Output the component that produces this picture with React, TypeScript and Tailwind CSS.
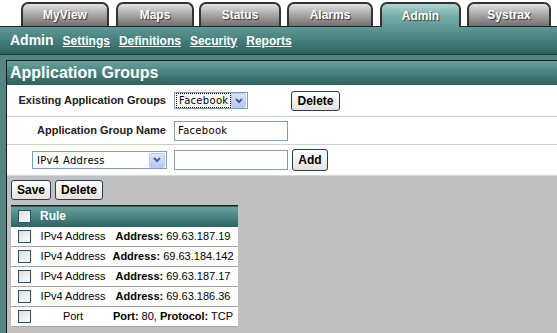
import React from "react";

const tabs = [
  { label: "MyView", cls: "ml-[21px] w-[88px]" },
  { label: "Maps", cls: "ml-[7px] w-[78px]" },
  { label: "Status", cls: "ml-[5px] w-[82px]" },
  { label: "Alarms", cls: "ml-[6px] w-[86px]" },
  { label: "Admin", cls: "ml-[7px] w-[81px]", active: true },
  { label: "Systrax", cls: "ml-[6px] w-[84px]" },
];

const rules = [
  { type: "IPv4 Address", parts: [["Address:", " 69.63.187.19"]] },
  { type: "IPv4 Address", parts: [["Address:", " 69.63.184.142"]] },
  { type: "IPv4 Address", parts: [["Address:", " 69.63.187.17"]] },
  { type: "IPv4 Address", parts: [["Address:", " 69.63.186.36"]] },
  { type: "Port", parts: [["Port:", " 80, "], ["Protocol:", " TCP"]] },
];

function Checkbox() {
  return (
    <span className="block h-[13px] w-[13px] border border-[#1c5180] bg-linear-to-br from-[#dcdcd7] to-white" />
  );
}

function Button({ children, cls }: { children: React.ReactNode; cls: string }) {
  return (
    <button
      className={
        "flex items-center justify-center rounded-[3px] border border-[#1f3e6a] bg-linear-to-b from-white to-[#e6e3d6] text-[12px] font-bold text-black " +
        cls
      }
    >
      {children}
    </button>
  );
}

function Select({ value, cls, focused }: { value: string; cls: string; focused?: boolean }) {
  return (
    <div className={"flex items-center border border-[#7f9db9] bg-white p-px " + cls}>
      <span
        className={
          "flex-1 px-[2px] font-['DejaVu_Sans'] text-[10px] leading-[13px] tracking-[0.3px] text-black " +
          (focused ? "border border-dotted border-black" : "border border-transparent")
        }
      >
        {value}
      </span>
      <span className="flex h-[15px] w-[16px] items-center justify-center rounded-[2px] border border-[#b9cbf3] bg-linear-to-b from-[#dbe5fd] to-[#b4c8f8]">
        <svg width="8" height="6" viewBox="0 0 8 6">
          <path d="M1 1 L4 4 L7 1" fill="none" stroke="#4d6185" strokeWidth="2" />
        </svg>
      </span>
    </div>
  );
}

function TextInput({ value }: { value: string }) {
  return (
    <div className="flex h-[20px] w-[114px] items-center border border-[#7f9db9] bg-white px-[3px] font-['DejaVu_Sans'] text-[10px] tracking-[0.3px] text-black">
      {value}
    </div>
  );
}

export default function App() {
  return (
    <div className="h-[333px] w-[557px] overflow-hidden bg-white font-['Liberation_Sans',Arial,sans-serif]">
      <div className="flex h-[27px] items-end border-b border-[#222]">
        {tabs.map((t) => (
          <div
            key={t.label}
            className={
              "flex h-[24px] items-center justify-center rounded-t-[7px] border-2 border-b-0 border-[#333] text-[12px] font-bold text-white [text-shadow:1px_1px_1px_#333] " +
              t.cls +
              (t.active
                ? " -mb-px h-[25px] bg-linear-to-b from-[#b0d4d1] via-[#78aeaa] to-[#5f9a96]"
                : " bg-linear-to-b from-[#e2e2e2] via-[#a6a6a6] to-[#707070]")
            }
          >
            {t.label}
          </div>
        ))}
      </div>

      <div className="flex h-[28px] items-center gap-[9px] border-b border-[#1d3b3a] bg-linear-to-b from-[#5f9a96] to-[#2d6260] pl-[10px] text-white">
        <span className="text-[14px] font-bold">Admin</span>
        <span className="text-[12px] font-bold underline">Settings</span>
        <span className="text-[12px] font-bold underline">Definitions</span>
        <span className="text-[12px] font-bold underline">Security</span>
        <span className="text-[12px] font-bold underline">Reports</span>
      </div>

      <div className="h-full bg-[#558583] pl-[6px] pt-[5px]">
        <div className="h-full border-l border-t border-[#1a1a1a] bg-[#c0c0c0]">
          <div className="flex h-[24px] items-center bg-linear-to-b from-[#68a29e] to-[#2c5f5d] pl-[3px] text-[16px] font-bold text-white">
            Application Groups
          </div>

          <div className="bg-white">
            <div className="flex h-[32px] items-center border-b border-[#cfcfcf]">
              <div className="w-[160px] pr-[1px] text-right text-[11px] font-bold text-[#222]">
                Existing Application Groups
              </div>
              <Select value="Facebook" cls="ml-[7px] h-[17px] w-[74px]" focused />
              <Button cls="ml-[43px] h-[20px] w-[49px]">Delete</Button>
            </div>
            <div className="flex h-[28px] items-center border-b border-[#cfcfcf]">
              <div className="w-[160px] pr-[1px] text-right text-[11px] font-bold text-[#222]">
                Application Group Name
              </div>
              <div className="ml-[7px]">
                <TextInput value="Facebook" />
              </div>
            </div>
            <div className="flex h-[30px] items-center">
              <div className="flex w-[160px] justify-end">
                <Select value="IPv4 Address" cls="h-[18px] w-[135px]" />
              </div>
              <div className="ml-[7px]">
                <TextInput value="" />
              </div>
              <Button cls="ml-[4px] h-[22px] w-[36px]">Add</Button>
            </div>
          </div>

          <div className="border-t border-[#d8d8d8] pl-[4px] pt-[4px]">
            <div className="flex gap-[4px]">
              <Button cls="h-[20px] w-[40px]">Save</Button>
              <Button cls="h-[20px] w-[48px]">Delete</Button>
            </div>
            <table className="mt-[5px] w-[227px] border-collapse bg-white text-[11px] text-black">
              <thead>
                <tr className="h-[21px] border-t border-[#1a1a1a] bg-linear-to-b from-[#68a29e] to-[#2e6462]">
                  <th className="w-[27px] pl-[7px]">
                    <Checkbox />
                  </th>
                  <th colSpan={2} className="pl-[2px] text-left text-[12px] font-bold text-white">
                    Rule
                  </th>
                </tr>
              </thead>
              <tbody>
                {rules.map((r, i) => (
                  <tr key={i} className="h-[20px] border-b border-[#a3a3a3]">
                    <td className="w-[27px] pl-[7px]">
                      <Checkbox />
                    </td>
                    <td className="w-[70px] text-center">{r.type}</td>
                    <td className="text-center">
                      {r.parts.map(([k, v]) => (
                        <React.Fragment key={k}>
                          <b>{k}</b>
                          {v}
                        </React.Fragment>
                      ))}
                    </td>
                  </tr>
                ))}
              </tbody>
            </table>
          </div>
        </div>
      </div>
    </div>
  );
}
